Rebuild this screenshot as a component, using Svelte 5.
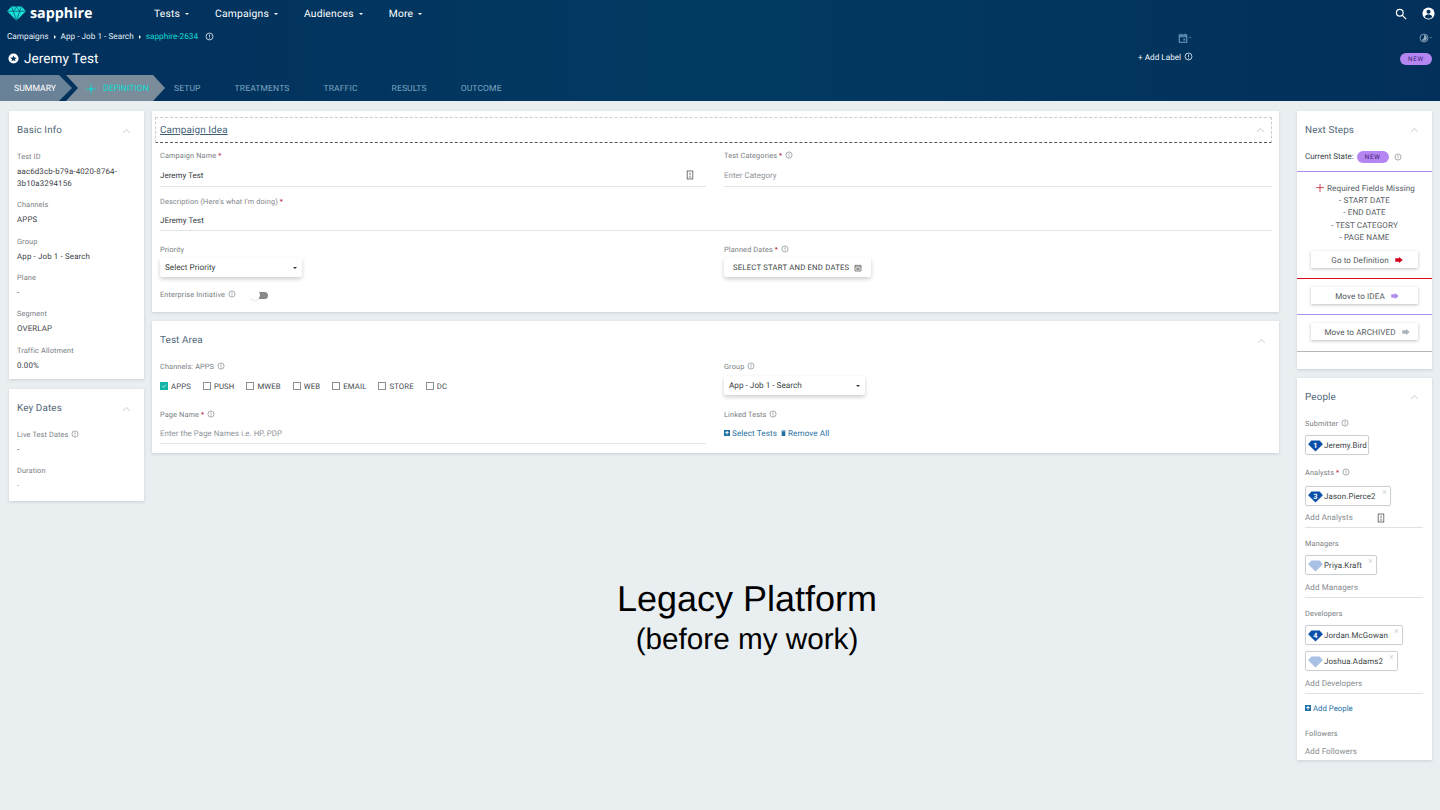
<script>
  const basic = [
    { label: 'Test ID', lines: ['aac6d3cb-b79a-4020-8764-', '3b10a3294156'] },
    { label: 'Channels', lines: ['APPS'] },
    { label: 'Group', lines: ['App - Job 1 - Search'] },
    { label: 'Plane', lines: ['-'] },
    { label: 'Segment', lines: ['OVERLAP'] },
    { label: 'Traffic Allotment', lines: ['0.00%'] }
  ];
  const channels = ['APPS', 'PUSH', 'MWEB', 'WEB', 'EMAIL', 'STORE', 'DC'];
  const tabs = ['SETUP', 'TREATMENTS', 'TRAFFIC', 'RESULTS', 'OUTCOME'];
  const nav = ['Tests', 'Campaigns', 'Audiences', 'More'];
</script>

{#snippet info()}
  <svg class="info" viewBox="0 0 12 12"><circle cx="6" cy="6" r="4.6" fill="none" stroke="currentColor" stroke-width="1"/><path d="M6 3.4v3.6M6 8v1" stroke="currentColor" stroke-width="1" fill="none"/></svg>
{/snippet}

{#snippet chevron()}
  <svg class="chev" viewBox="0 0 12 8"><path d="M1.5 6.5 6 2l4.5 4.5" fill="none" stroke="#d3dade" stroke-width="1.4"/></svg>
{/snippet}

{#snippet note()}
  <svg class="note" viewBox="0 0 10 12"><rect x="1.5" y="1" width="7" height="10" fill="none" stroke="#555" stroke-width="1"/><path d="M5 3v3.5M3.5 8.5h3" stroke="#555" stroke-width="1"/></svg>
{/snippet}

{#snippet gem(fill, n)}
  <svg class="gem" viewBox="0 0 16 13">
    <path d="M3.5 0.5h9L16 4.5 8 12.5 0 4.5z" fill={fill}/>
    {#if n}<text x="8" y="8.6" text-anchor="middle" class="gemnum">{n}</text>{/if}
  </svg>
{/snippet}

{#snippet arrow(color)}
  <svg class="arrow" viewBox="0 0 10 8"><path d="M0 1.800h5V0l5 4-5 4V6.200H0z" fill={color}/></svg>
{/snippet}

{#snippet chip(fill, n, name, w, close = true)}
  <div class="chip" style="width:{w}px">
    {@render gem(fill, n)}
    <span>{name}</span>
    {#if close}<i class="x">×</i>{/if}
  </div>
{/snippet}

<div class="page">
  <header>
    <div class="topnav">
      <div class="logo">
        <svg viewBox="0 0 20 16" class="logogem">
          <path d="M4.5 0.5h11L20 5.5 10 15.5 0 5.5z" fill="#19e3d6"/>
          <path d="M0.5 5.6h19M6.5 5.6 10 15M13.5 5.6 10 15M4.8 1l1.7 4.6L10 1l3.5 4.6L15.2 1" fill="none" stroke="#0a4f70" stroke-width="0.8"/>
        </svg>
        <span>sapphire</span>
      </div>
      <nav>
        {#each nav as item}
          <span class="navitem">{item}<b class="caret"></b></span>
        {/each}
      </nav>
      <div class="topicons">
        <svg viewBox="0 0 14 14" class="search"><circle cx="5.6" cy="5.6" r="3.9" fill="none" stroke="#fff" stroke-width="1.4"/><path d="m8.6 8.6 4.4 4.4" stroke="#fff" stroke-width="1.5"/></svg>
        <svg viewBox="0 0 14 14" class="user"><circle cx="7" cy="7" r="6.5" fill="#fff"/><circle cx="7" cy="5.2" r="2.2" fill="#02305a"/><path d="M2.9 10.4c1-1.7 2.6-2.2 4.1-2.2s3.1.5 4.1 2.2C10 11.8 8.6 12.4 7 12.4s-3-.6-4.1-2z" fill="#02305a"/></svg>
      </div>
    </div>
    <div class="crumbs">
      <div class="crumbtext">
        <span>Campaigns</span><b class="tri"></b><span>App - Job 1 - Search</span><b class="tri"></b><span class="cyan">sapphire-2634</span>
        <span class="cinfo">{@render info()}</span>
      </div>
      <div class="crumbright">
        <span class="cal">
          <svg viewBox="0 0 12 12" class="calicon"><path d="M1.5 2.5h9v8.500h-9zM1.500 4.500h9M3.500 1v2M8.500 1v2" fill="none" stroke="#6f9dc0" stroke-width="1.300"/><rect x="6.500" y="7" width="2" height="2" fill="#6f9dc0"/></svg>
          <em>-</em>
        </span>
        <span class="clock">
          <svg viewBox="0 0 12 12" class="calicon"><circle cx="6" cy="6" r="4.800" fill="none" stroke="#8fa9bd" stroke-width="1"/><path d="M6 2.500V6L3.500 8.500A3.500 3.500 0 1 0 6 2.500z" fill="#8fa9bd"/></svg>
          <em>-</em>
        </span>
      </div>
    </div>
    <div class="titlerow">
      <div class="title">
        <svg viewBox="0 0 12 12" class="titleicon"><circle cx="6" cy="6" r="5.500" fill="#fff"/><path d="M6 2.600l1 2.300 2.500.2-1.900 1.600.6 2.400L6 7.800 3.800 9.100l.6-2.400-1.900-1.600 2.500-.2z" fill="#02335d"/></svg>
        <span>Jeremy Test</span>
      </div>
      <div class="addlabel">+ Add Label <span class="linfo">{@render info()}</span></div>
      <span class="pill headpill">NEW</span>
    </div>
    <div class="tabs">
      <div class="seg summary">SUMMARY</div>
      <div class="seg definition">
        <svg viewBox="0 0 12 12" class="spark"><path d="M6 0v12M0 6h12" stroke="#0fd8cf" stroke-width="1"/><circle cx="6" cy="6" r="1.800" fill="#0fd8cf"/></svg>
        DEFINITION
      </div>
      {#each tabs as t}<span class="tab">{t}</span>{/each}
    </div>
  </header>

  <main>
    <div class="col left">
      <section class="card basic">
        <div class="cardhead"><h3>Basic Info</h3>{@render chevron()}</div>
        {#each basic as f}
          <div class="stat" class:tall={f.lines.length > 1}>
            <label>{f.label}</label>
            {#each f.lines as l}<p>{l}</p>{/each}
          </div>
        {/each}
      </section>
      <section class="card dates">
        <div class="cardhead"><h3>Key Dates</h3>{@render chevron()}</div>
        <div class="stat"><label>Live Test Dates {@render info()}</label><p>-</p></div>
        <div class="stat"><label>Duration</label><p class="muted">-</p></div>
      </section>
    </div>

    <div class="col mid">
      <section class="card idea">
        <div class="dashed"><h3><u>Campaign Idea</u></h3>{@render chevron()}</div>
        <div class="grid r1">
          <div>
            <label>Campaign Name <s>*</s></label>
            <div class="input"><span>Jeremy Test</span>{@render note()}</div>
          </div>
          <div>
            <label>Test Categories <s>*</s> {@render info()}</label>
            <div class="input ph"><span>Enter Category</span></div>
          </div>
        </div>
        <div class="desc">
          <label>Description (Here's what I'm doing) <s>*</s></label>
          <div class="input"><span>JEremy Test</span></div>
        </div>
        <div class="grid r3">
          <div>
            <label>Priority</label>
            <div class="select pri"><span>Select Priority</span><b class="caret dark"></b></div>
            <div class="toggle">
              <label>Enterprise Initiative {@render info()}</label>
              <span class="switch"><i></i></span>
            </div>
          </div>
          <div>
            <label>Planned Dates <s>*</s> {@render info()}</label>
            <div class="select datebtn"><span>SELECT START AND END DATES</span>
              <svg viewBox="0 0 12 12" class="btncal"><path d="M1.500 2h9v8.500h-9zM1.500 4.300h9M3.500 6.500h5M3.500 8.300h5" fill="none" stroke="#444" stroke-width="1"/></svg>
            </div>
          </div>
        </div>
      </section>

      <section class="card area">
        <div class="areahead"><h3>Test Area</h3>{@render chevron()}</div>
        <div class="grid r4">
          <div>
            <label>Channels: APPS {@render info()}</label>
            <div class="checks">
              {#each channels as c, i}
                <span class="check">
                  <i class:on={i === 0}>{#if i === 0}<svg viewBox="0 0 10 10"><path d="m2 5 2.200 2.200L8 3" fill="none" stroke="#fff" stroke-width="1.200"/></svg>{/if}</i>{c}
                </span>
              {/each}
            </div>
          </div>
          <div>
            <label>Group {@render info()}</label>
            <div class="select grp"><span>App - Job 1 - Search</span><b class="caret dark"></b></div>
          </div>
        </div>
        <div class="grid r5">
          <div>
            <label>Page Name <s>*</s> {@render info()}</label>
            <div class="input ph"><span>Enter the Page Names i.e. HP, PDP</span></div>
          </div>
          <div>
            <label>Linked Tests {@render info()}</label>
            <div class="links">
              <span><b class="plus">+</b>Select Tests</span>
              <span><svg viewBox="0 0 8 10" class="trash"><path d="M1 2.500h6V10H1zM0.500 1h7v1h-7z" fill="#1f6fa3"/></svg>Remove All</span>
            </div>
          </div>
        </div>
      </section>
    </div>

    <div class="col right">
      <section class="card steps">
        <div class="cardhead"><h3>Next Steps</h3>{@render chevron()}</div>
        <div class="state"><span>Current State:</span><span class="pill">NEW</span>{@render info()}</div>
        <div class="missing">
          <p class="req"><svg viewBox="0 0 10 10" class="cross"><path d="M5 0v10M0 4.500h10" stroke="#c8202f" stroke-width="1"/></svg>Required Fields Missing</p>
          <p>- START DATE</p>
          <p>- END DATE</p>
          <p>- TEST CATEGORY</p>
          <p>- PAGE NAME</p>
        </div>
        <div class="stepbox redline"><div class="stepbtn">Go to Definition {@render arrow('#d4011e')}</div></div>
        <div class="stepbox purpleline"><div class="stepbtn">Move to IDEA {@render arrow('#b18cf0')}</div></div>
        <div class="stepbox grayline"><div class="stepbtn">Move to ARCHIVED {@render arrow('#aab4ba')}</div></div>
      </section>

      <section class="card people">
        <div class="cardhead"><h3>People</h3>{@render chevron()}</div>
        <label class="pl first">Submitter {@render info()}</label>
        {@render chip('#0b4fa8', '1', 'Jeremy.Bird', 64, false)}
        <label class="pl analysts">Analysts <s>*</s> {@render info()}</label>
        {@render chip('#0b4fa8', '3', 'Jason.Pierce2', 86)}
        <div class="add short">Add Analysts {@render note()}</div>
        <label class="pl">Managers</label>
        {@render chip('#a9c1e4', '', 'Priya.Kraft', 72)}
        <div class="add">Add Managers</div>
        <label class="pl">Developers</label>
        {@render chip('#0b4fa8', '4', 'Jordan.McGowan', 98)}
        <div class="chipgap">{@render chip('#a9c1e4', '', 'Joshua.Adams2', 93)}</div>
        <div class="add">Add Developers</div>
        <div class="addpeople"><b class="plus">+</b>Add People</div>
        <label class="pl followers">Followers</label>
        <div class="addf">Add Followers</div>
      </section>
    </div>
  </main>

  <div class="overlay">
    <div class="big">Legacy Platform</div>
    <div class="sub">(before my work)</div>
  </div>
</div>

<style>
  :global(body) { margin: 0; background: #e9eef1; }
  .page { position: relative; width: 1440px; height: 810px; overflow: hidden; background: #e9eef1; font-family: Roboto, "Liberation Sans", sans-serif; color: #3a3f44; text-rendering: geometricPrecision; }
  p, h3 { margin: 0; font-weight: 400; }
  label { display: block; font-size: 7.350px; line-height: 12px; color: #777d82; letter-spacing: 0.12px; }
  s { text-decoration: none; color: #b3203a; }
  .info { width: 8px; height: 8px; vertical-align: -1px; color: #7d8488; margin-left: 1px; }

  header { height: 101px; background: linear-gradient(90deg, #02305c 0%, #023a62 50%, #02305a 100%); color: #fff; }
  .topnav { height: 27px; display: flex; align-items: center; padding: 0 5px 0 7px; }
  .logo { display: flex; align-items: center; gap: 4px; width: 147px; font-size: 14.300px; font-weight: 700; font-family: "Open Sans", Roboto, sans-serif; }
  .logogem { width: 19px; height: 15px; }
  nav { display: flex; gap: 26px; }
  .navitem { font-size: 10.300px; letter-spacing: 0.2px; display: flex; align-items: center; gap: 5px; }
  .caret { width: 0; height: 0; border-left: 2.200px solid transparent; border-right: 2.200px solid transparent; border-top: 2.200px solid #fff; display: inline-block; }
  .caret.dark { border-top-color: #333; }
  .topicons { margin-left: auto; display: flex; align-items: center; gap: 15px; padding-right: 0; }
  .search { width: 12px; height: 12px; }
  .user { width: 13px; height: 13px; }

  .crumbs { height: 18px; display: flex; align-items: center; justify-content: space-between; padding: 1px 8px 0 7px; box-sizing: border-box; }
  .crumbtext { display: flex; align-items: center; font-size: 8.200px; letter-spacing: 0.02px; color: #e4edf3; }
  .tri { width: 0; height: 0; border-top: 2px solid transparent; border-bottom: 2px solid transparent; border-left: 2.500px solid #fff; margin: 0 5px; }
  .cyan { color: #12dcd2; }
  .cinfo { margin-left: 6px; display: flex; }
  .cinfo .info, .linfo .info { color: #fff; width: 9px; height: 9px; }
  .crumbright { display: flex; width: 254px; justify-content: space-between; align-items: center; padding-top: 2px; }
  .cal, .clock { display: flex; align-items: center; gap: 1px; font-size: 8px; color: #7f9db3; }
  .cal em, .clock em { font-style: normal; }
  .calicon { width: 10px; height: 10px; }

  .titlerow { height: 27px; display: flex; align-items: center; padding: 0 8px 0 8px; }
  .title { display: flex; align-items: center; gap: 5px; font-size: 13.500px; width: 1130px; letter-spacing: 0.1px; }
  .titleicon { width: 11px; height: 11px; }
  .addlabel { font-size: 8.200px; width: 262px; color: #f0f5f8; position: relative; top: -1px; }
  .pill { display: inline-flex; align-items: center; justify-content: center; background: #b585f2; border-radius: 7px; color: #3a1c70; font-size: 6.300px; letter-spacing: 0.7px; }
  .headpill { width: 32px; height: 12px; }

  .tabs { margin-top: 3px; height: 26px; display: flex; align-items: center; }
  .seg { height: 26px; display: flex; align-items: center; font-size: 8.700px; padding-top: 2px; }
  .summary { width: 72px; padding-left: 14px; box-sizing: border-box; background: #6a8297; color: #fff; clip-path: polygon(0 0, 59px 0, 72px 50%, 59px 100%, 0 100%); }
  .definition { width: 99px; margin-left: -6px; padding-left: 20px; gap: 7px; box-sizing: border-box; background: #7b8c9b; color: #0fdcd2; clip-path: polygon(0 0, 87px 0, 99px 50%, 87px 100%, 0 100%, 12px 50%); }
  .spark { width: 10px; height: 10px; }
  .tab { font-size: 8.500px; letter-spacing: 0.14px; color: #7ea6c1; margin-right: 34px; padding-top: 2px; }
  .seg + .tab { margin-left: 9px; }

  main { display: flex; padding: 10px 8px 0 9px; align-items: flex-start; }
  .col { display: flex; flex-direction: column; }
  .left { width: 135px; gap: 10px; }
  .mid { width: 1127px; margin-left: 8px; gap: 9px; }
  .right { width: 135px; margin-left: 18px; gap: 9px; }
  .card { background: #fff; box-shadow: 0 1px 3px rgba(60, 80, 100, 0.18); box-sizing: border-box; }
  h3 { font-size: 9.900px; color: #52687a; letter-spacing: 0.12px; }
  .cardhead { display: flex; justify-content: space-between; align-items: center; height: 38px; padding: 0 13px 0 8px; }
  .chev { width: 9px; height: 6px; }

  .basic { height: 268px; padding-left: 8px; }
  .dates { height: 112px; padding-left: 8px; }
  .stat { height: 36.300px; }
  .stat.tall { height: 48.400px; }
  .stat label { line-height: 14px; }
  .stat p { font-size: 7.900px; line-height: 12px; color: #3c4145; letter-spacing: 0.15px; }
  .stat label + p { margin-top: 2px; }
  .basic .cardhead, .dates .cardhead { padding-left: 0; padding-right: 13px; height: 39px; }
  .basic h3, .dates h3 { margin-bottom: 1px; }
  .muted { color: #9aa0a4 !important; }

  .idea { height: 201px; padding: 6px 7px 0 3px; }
  .dashed { height: 26px; border: 1px dashed transparent; border-top-color: #c9cdd0; border-bottom-color: #55595c; border-left-color: #c9cdd0; border-right-color: #c9cdd0; box-sizing: border-box; display: flex; align-items: center; justify-content: space-between; padding: 0 6px 0 4px; }
  .dashed h3 { color: #3f5f78; }
  .grid { display: grid; grid-template-columns: 546px 548px; column-gap: 18px; }
  .idea .grid, .desc { margin-left: 5px; }
  .r1 { margin-top: 7px; }
  .input { height: 25px; border-bottom: 1px solid #e2e5e7; display: flex; align-items: center; justify-content: space-between; padding: 2px 12px 0 0; font-size: 7.900px; color: #33383c; box-sizing: border-box; letter-spacing: 0.05px; }
  .ph { color: #8d9398; }
  .note { width: 8px; height: 10px; }
  .desc { margin-top: 9px; }
  .desc .input { width: 1112px; height: 23px; padding-top: 2px; }
  .desc label { color: #808589; }
  .r3 { margin-top: 13px; }
  .select { height: 19px; background: #fff; box-shadow: 0 2px 4px rgba(0, 0, 0, 0.2); border-radius: 2px; display: flex; align-items: center; justify-content: space-between; font-size: 8.200px; color: #3b3f43; box-sizing: border-box; margin-top: 2px; }
  .pri { width: 142px; padding: 0 5px; }
  .datebtn { width: 147px; padding: 0 9px; font-size: 7.700px; letter-spacing: 0.22px; white-space: nowrap; }
  .grp { width: 141px; padding: 0 5px; }
  .btncal { width: 8px; height: 8px; }
  .toggle { display: flex; align-items: center; gap: 14px; margin-top: 11px; height: 14px; }
  .switch { position: relative; width: 9px; height: 7px; display: block; margin-left: 9px; background: #85898c; border-radius: 0 4px 4px 0; }
  .switch i { position: absolute; left: -9px; top: -2px; width: 10px; height: 10px; background: #fff; border-radius: 50%; box-shadow: 0 1px 2px rgba(0, 0, 0, 0.1); }

  .area { height: 132px; padding: 0 7px 0 8px; }
  .areahead { height: 39px; display: flex; align-items: center; justify-content: space-between; padding-right: 6px; }
  .r4 label { line-height: 14px; }
  .checks { display: flex; margin-top: 5px; height: 14px; align-items: center; gap: 12px; }
  .check { display: flex; align-items: center; gap: 3px; font-size: 7.750px; color: #454a4e; letter-spacing: 0.12px; }
  .check i { width: 6px; height: 6px; border: 1px solid #8b9094; display: block; box-sizing: content-box; }
  .check i.on { background: #12b5a6; border-color: #12b5a6; }
  .check svg { display: block; }
  .r4 .select { margin-top: 2px; }
  .r5 { margin-top: 14px; }
  .r5 .input { width: 546px; height: 23px; padding-top: 3px; }
  .links { display: flex; gap: 4px; margin-top: 7px; font-size: 8.100px; color: #1f6fa3; letter-spacing: 0.1px; }
  .links span { display: flex; align-items: center; gap: 2px; }
  .plus { display: inline-flex; width: 6px; height: 6px; background: #1f6fa3; color: #fff; font-size: 7px; line-height: 6px; justify-content: center; align-items: center; font-weight: 700; }
  .trash { width: 5px; height: 6px; }

  .steps { height: 258px; }
  .state { height: 15px; padding: 0 0 0 8px; display: flex; align-items: center; font-size: 8px; color: #3d4246; gap: 3px; }
  .state .pill { width: 32px; height: 12px; }
  .state .info { margin-left: 2px; }
  .missing { margin-top: 7px; border-top: 1px solid #a88ce6; padding-top: 10px; text-align: center; font-size: 8.100px; line-height: 12.200px; color: #565b5f; letter-spacing: 0.1px; }
  .req { display: flex; justify-content: center; align-items: center; gap: 3px; padding-left: 2px; }
  .cross { width: 8px; height: 8px; }
  .stepbox { padding: 8px 14px 0; box-sizing: border-box; height: 36px; }
  .stepbtn { height: 17px; box-shadow: 0 1px 3px rgba(0, 0, 0, 0.25); display: flex; align-items: center; justify-content: center; gap: 6px; padding-left: 5px; font-size: 8.100px; color: #53585c; background: #fff; letter-spacing: 0.1px; }
  .arrow { width: 8px; height: 6px; }
  .redline { border-bottom: 1px solid #e2091f; }
  .purpleline { border-bottom: 1px solid #ad90ea; }
  .grayline { border-bottom: 1px solid #b3b7ba; height: 37px; }

  .people { height: 382px; padding-left: 8px; }
  .people .cardhead { padding-left: 0; height: 38px; }
  .pl { line-height: 12px; margin-bottom: 5px; margin-top: 10px; }
  .first { margin-top: 2px; margin-bottom: 5px; }
  .analysts { margin-top: 12px; margin-bottom: 7px; }
  .chip { position: relative; height: 20px; border: 1px solid #ccd0d3; border-radius: 2px; display: flex; align-items: center; gap: 1px; padding: 1px 0 0 2px; box-sizing: border-box; font-size: 7.950px; color: #3a3f43; box-shadow: 0 0 2px rgba(0, 0, 0, 0.05); letter-spacing: 0.1px; }
  .chipgap { margin-top: 6px; }
  .gem { width: 15px; height: 12px; flex: none; }
  .gemnum { font: 700 8px Roboto, sans-serif; fill: #fff; }
  .x { position: absolute; right: 3px; top: 0; font-style: normal; font-size: 9px; line-height: 12px; color: #d3d6d8; }
  .add { height: 23px; width: 118px; border-bottom: 1px solid #dfe2e4; display: flex; align-items: center; justify-content: space-between; font-size: 8px; color: #878c90; box-sizing: border-box; padding: 3px 38px 0 0; letter-spacing: 0.1px; }
  .add.short { height: 22px; padding-top: 2px; }
  .addpeople { display: flex; align-items: center; gap: 2px; margin-top: 8px; font-size: 7.800px; color: #1f6fa3; height: 12px; }
  .followers { margin-top: 14px; margin-bottom: 0; }
  .addf { font-size: 8px; color: #878c90; margin-top: 6px; line-height: 12px; letter-spacing: 0.1px; }

  .overlay { position: absolute; left: 478px; top: 577px; width: 538px; text-align: center; color: #000; font-family: "Liberation Sans", Arial, sans-serif; }
  .big { font-size: 36px; line-height: 44px; }
  .sub { font-size: 29.700px; line-height: 38px; }
</style>
